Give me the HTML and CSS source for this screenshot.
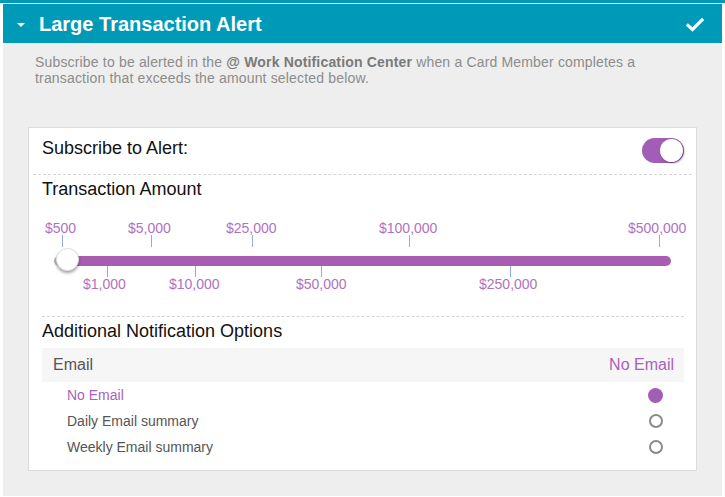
FILE: index.html
```html
<!DOCTYPE html>
<html>
<head>
<meta charset="utf-8">
<link rel="stylesheet" href="styles.css">
</head>
<body>
<div class="topstrip"></div>
<div class="panel">
  <div class="panel-header">
    <span class="caret"></span>
    <h1 class="title">Large Transaction Alert</h1>
    <svg class="check" width="18" height="14" viewBox="0 0 18 14"><path d="M2 7.5 L6.5 11.5 L16 2" fill="none" stroke="#fff" stroke-width="3.2" stroke-linecap="square"/></svg>
  </div>
  <div class="panel-body">
    <p class="desc">Subscribe to be alerted in the <b>@ Work Notification Center</b> when a Card Member completes a transaction that exceeds the amount selected below.</p>
    <div class="card">
      <div class="sub-row">
        <span class="label">Subscribe to Alert:</span>
        <span class="toggle"><span class="knob"></span></span>
      </div>
      <div class="dash wide"></div>
      <div class="section-title">Transaction Amount</div>
      <div class="slider">
        <span class="amt" style="left:3px;top:20px">$500</span>
        <span class="amt" style="left:86px;top:20px">$5,000</span>
        <span class="amt" style="left:184px;top:20px">$25,000</span>
        <span class="amt" style="left:337px;top:20px">$100,000</span>
        <span class="amt" style="left:586px;top:20px">$500,000</span>
        <span class="tick top" style="left:20px"></span>
        <span class="tick top" style="left:109px"></span>
        <span class="tick top" style="left:210px"></span>
        <span class="tick top" style="left:367px"></span>
        <span class="tick top" style="left:617px"></span>
        <span class="track"></span>
        <span class="track-start"></span>
        <span class="thumb"></span>
        <span class="tick bottom" style="left:65px"></span>
        <span class="tick bottom" style="left:153px"></span>
        <span class="tick bottom" style="left:279px"></span>
        <span class="tick bottom" style="left:468px"></span>
        <span class="amt" style="left:41px;top:76px">$1,000</span>
        <span class="amt" style="left:127px;top:76px">$10,000</span>
        <span class="amt" style="left:254px;top:76px">$50,000</span>
        <span class="amt" style="left:437px;top:76px">$250,000</span>
      </div>
      <div class="dash"></div>
      <div class="section-title">Additional Notification Options</div>
      <div class="opt-head">
        <span>Email</span>
        <span class="sel">No Email</span>
      </div>
      <ul class="options">
        <li class="opt active"><span>No Email</span><span class="radio on"></span></li>
        <li class="opt"><span>Daily Email summary</span><span class="radio"></span></li>
        <li class="opt"><span>Weekly Email summary</span><span class="radio"></span></li>
      </ul>
    </div>
  </div>
</div>
</body>
</html>
```

FILE: styles.css
```css
* { box-sizing: border-box; }
body {
  margin: 0;
  background: #fff;
  font-family: "Liberation Sans", Arial, sans-serif;
}
.topstrip {
  height: 3px;
  background: #009ab9;
  margin-bottom: 1px;
}
.panel {
  margin: 0 3px;
}
.panel-header {
  height: 39px;
  background: #009ab9;
  display: flex;
  align-items: center;
  padding: 0 18px 0 14px;
}
.caret {
  width: 0;
  height: 0;
  border-left: 4px solid transparent;
  border-right: 4px solid transparent;
  border-top: 4px solid #fff;
  margin-top: 2px;
}
.title {
  margin: 0 0 0 14px;
  font-size: 20px;
  font-weight: bold;
  color: #fff;
  flex: 1;
  line-height: 24px;
}
.check {
  display: block;
  margin-top: 3px;
}
.panel-body {
  background: #eeeeee;
  padding: 11px 25px 25px 25px;
}
.desc {
  margin: 0 0 41px 7px;
  padding-right: 50px;
  font-size: 14px;
  line-height: 16px;
  letter-spacing: 0.17px;
  color: #8c8c8c;
}
.desc b { color: #7a7a7a; }
.card {
  background: #fff;
  border: 1px solid #dcdcdc;
  padding: 0 12px 10px 13px;
}
.sub-row {
  height: 46px;
  display: flex;
  justify-content: space-between;
  align-items: flex-start;
  padding-top: 9px;
}
.label {
  font-size: 18px;
  line-height: 22px;
  color: #111;
}
.toggle {
  width: 42px;
  height: 25px;
  margin-top: 1px;
  border-radius: 13px;
  background: #a25db6;
  position: relative;
}
.knob {
  position: absolute;
  right: 1px;
  top: 1px;
  width: 23px;
  height: 23px;
  border-radius: 50%;
  background: #fff;
  box-shadow: 1px 1px 2px rgba(60, 0, 80, 0.5);
}
.dash {
  border-top: 1px dashed #d4d4d4;
  height: 0;
}
.dash.wide {
  margin: 0 -8px 0 -9px;
}
.section-title {
  font-size: 18px;
  line-height: 22px;
  color: #111;
  margin-top: 3px;
}
.slider {
  position: relative;
  height: 116px;
}
.amt {
  position: absolute;
  font-size: 14px;
  line-height: 16px;
  color: #b071c2;
  white-space: nowrap;
}
.tick {
  position: absolute;
  width: 1px;
  background: #98a8e0;
}
.tick.top { top: 35px; height: 12px; }
.tick.bottom { top: 66px; height: 11px; }
.track {
  position: absolute;
  left: 15px;
  top: 56px;
  width: 614px;
  height: 10px;
  border-radius: 5px;
  background: #a85db3;
}
.track-start {
  position: absolute;
  left: 12px;
  top: 56px;
  width: 14px;
  height: 10px;
  border-radius: 5px 0 0 5px;
  background: #b8b8b8;
}
.thumb {
  position: absolute;
  left: 14px;
  top: 48px;
  width: 23px;
  height: 23px;
  border-radius: 50%;
  background: #fff;
  border: 1px solid #e0e0e0;
  box-shadow: 0 2px 3px rgba(0, 0, 0, 0.35);
}
.opt-head {
  margin-top: 6px;
  height: 34px;
  background: #f6f6f6;
  display: flex;
  justify-content: space-between;
  align-items: center;
  padding: 0 10px 0 11px;
  font-size: 16px;
  color: #555;
}
.opt-head .sel { color: #a862b9; }
.options {
  list-style: none;
  margin: 0;
  padding: 0;
}
.opt {
  height: 26px;
  display: flex;
  justify-content: space-between;
  align-items: center;
  padding: 0 21px 0 25px;
  font-size: 14px;
  color: #555;
}
.opt.active { color: #a862b9; }
.radio {
  width: 14px;
  height: 14px;
  border-radius: 50%;
  border: 2px solid #8a8a8a;
}
.radio.on {
  width: 15px;
  height: 15px;
  border: none;
  background: #a25db6;
}
```
